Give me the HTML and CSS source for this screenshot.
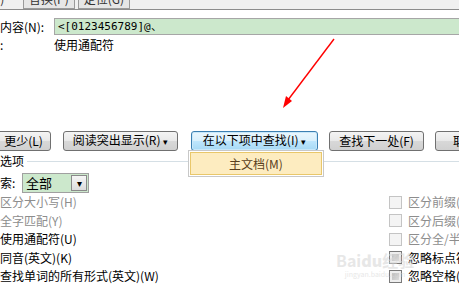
FILE: index.html
```html
<!DOCTYPE html>
<html lang="zh-CN">
<head>
    <meta charset="UTF-8">
    <title>查找和替换</title>
    <link rel="stylesheet" href="styles.css">
</head>
<body>
    <!-- Tabs (mostly cut off at the top) -->
    <div class="tabs">
        <div class="tab-strip">
            <span class="tab tab-active">查找(D)</span>
            <span class="tab">替换(P)</span>
            <span class="tab">定位(G)</span>
        </div>
    </div>

    <!-- Find what -->
    <div class="find-row">
        <span class="find-label">内容(N):</span>
        <div class="find-field">&lt;[0123456789]@、</div>
    </div>
    <div class="format-row">
        <span class="find-label">:</span>
        <span>使用通配符</span>
    </div>

    <!-- Buttons -->
    <div class="button-row">
        <button class="btn btn-less">更少(L)</button>
        <button class="btn btn-read">阅读突出显示(R) <span class="caret">▾</span></button>
        <button class="btn btn-focus">在以下项中查找(I) <span class="caret">▾</span></button>
        <button class="btn btn-next">查找下一处(F)</button>
        <button class="btn btn-cancel">取消</button>
    </div>

    <!-- Search options -->
    <div class="options-title">
        <span>选项</span>
        <span class="options-line"></span>
    </div>
    <div class="search-row">
        <span class="search-label">索:</span>
        <div class="select">
            <span class="select-value">全部</span>
            <span class="select-button">▾</span>
        </div>
    </div>

    <div class="options">
        <ul class="opt-list">
            <li class="disabled">区分大小写(H)</li>
            <li class="disabled">全字匹配(Y)</li>
            <li>使用通配符(U)</li>
            <li>同音(英文)(K)</li>
            <li>查找单词的所有形式(英文)(W)</li>
        </ul>
        <ul class="opt-list opt-right">
            <li class="disabled"><span class="box"></span>区分前缀(X)</li>
            <li class="disabled"><span class="box"></span>区分后缀(T)</li>
            <li class="disabled"><span class="box"></span>区分全/半角(M)</li>
            <li><span class="box box-grey"></span>忽略标点符号(S)</li>
            <li><span class="box box-grey"></span>忽略空格(A)</li>
        </ul>
    </div>

    <!-- Dropdown menu of the focused button -->
    <div class="menu">
        <div class="menu-item">主文档(M)</div>
    </div>

    <!-- Red annotation arrow -->
    <svg class="arrow" width="459" height="305" viewBox="0 0 459 305">
        <line x1="334" y1="39" x2="288" y2="100" stroke="#ff0000" stroke-width="1.4"/>
        <polygon points="283,108 292,101 286,96" fill="#ff0000"/>
    </svg>

    <div class="watermark">
        <span class="wm-logo">Bai<b>du</b>经验</span>
        <span class="wm-url">jingyan.baidu.com</span>
    </div>
</body>
</html>
```

FILE: styles.css
```css
body {
    margin: 0;
    width: 459px;
    height: 305px;
    overflow: hidden;
    position: relative;
    background: #ffffff;
    font-family: "Noto Sans CJK SC", "Liberation Sans", sans-serif;
    font-size: 12px;
    line-height: 14px;
    color: #000000;
}
.tabs {
    height: 9px;
    overflow: hidden;
    background: #f0f0f0;
    border-bottom: 1px solid #8c8c8c;
}
.tab-strip {
    display: flex;
    gap: 3px;
    margin-top: -11px;
    margin-left: -42px;
}
.tab {
    height: 18px;
    line-height: 18px;
    padding: 0 5px;
    border: 1px solid #9a9a9a;
    background: #e6e6e6;
    color: #333333;
}
.tab-active {
    background: #f0f0f0;
    border-color: #f0f0f0;
    width: 50px;
}
.find-row {
    display: flex;
    align-items: center;
    margin-top: 8px;
}
.find-label {
    width: 54px;
    flex-shrink: 0;
}
.find-field {
    flex: 1;
    height: 13px;
    line-height: 13px;
    border: 1px solid #a6a6a6;
    border-right: none;
    padding: 1px 3px;
    background: #cce8cc;
    font-family: "DejaVu Sans Mono", "Liberation Mono", monospace;
    font-size: 11px;
}
.format-row {
    display: flex;
    margin-top: 3px;
}
.button-row {
    display: flex;
    margin-top: 79px;
    margin-left: -20px;
    white-space: nowrap;
}
.btn {
    height: 20px;
    padding: 0;
    margin: 0;
    border: 1px solid #707070;
    border-radius: 3px;
    background: linear-gradient(#f4f4f4, #e8e8e8 50%, #d8d8d8 51%, #d0d0d0);
    font-family: "Noto Sans CJK SC", "Liberation Sans", sans-serif;
    font-size: 12px;
    line-height: 16px;
    color: #000000;
    flex-shrink: 0;
}
.caret {
    font-size: 9px;
}
.btn-less {
    width: 71px;
    padding-left: 16px;
}
.btn-read {
    width: 115px;
    margin-left: 12px;
}
.btn-focus {
    width: 127px;
    margin-left: 13px;
    border-color: #3c7fb1;
    background: linear-gradient(#eaf6fd, #d9f0fc 50%, #bee6fd 51%, #a7d9f5);
    box-shadow: inset 0 0 0 1px #c8e8fa;
}
.btn-next {
    width: 95px;
    margin-left: 11px;
}
.btn-cancel {
    width: 60px;
    margin-left: 11px;
}
.options-title {
    display: flex;
    align-items: center;
    margin-top: 3px;
}
.options-line {
    flex: 1;
    height: 1px;
    margin-left: 3px;
    background: #d5dfe5;
}
.search-row {
    display: flex;
    align-items: center;
    margin-top: 5px;
}
.search-label {
    width: 22px;
}
.select {
    display: flex;
    width: 65px;
    height: 18px;
    border: 1px solid #a0a0a0;
    background: #cce8cc;
}
.select-value {
    flex: 1;
    padding-left: 3px;
    line-height: 18px;
    font-size: 13px;
}
.select-button {
    width: 14px;
    margin: 1px;
    border: 1px solid #8a8a8a;
    background: linear-gradient(#f6f6f6, #dcdcdc);
    font-size: 10px;
    line-height: 14px;
    text-align: center;
}
.options {
    display: flex;
    justify-content: space-between;
    margin-top: 0;
}
.opt-list {
    list-style: none;
    margin: 0;
    padding: 0;
    white-space: nowrap;
}
.opt-list li {
    display: flex;
    align-items: center;
    height: 18.5px;
}
.opt-list .disabled {
    color: #8d8d8d;
}
.opt-right {
    width: 70px;
}
.box {
    width: 11px;
    height: 11px;
    margin-right: 6px;
    border: 1px solid #c4c4c4;
    background: #f4f4f4;
    flex-shrink: 0;
}
.box-grey {
    border-color: #7a7a7a;
    background: linear-gradient(135deg, #b0b0b0, #e6e6e6);
    box-shadow: inset 0 0 0 2px #eeeeee;
}
.menu {
    position: absolute;
    left: 188px;
    top: 150px;
    width: 132px;
    height: 23px;
    border: 1px solid #c8c8c8;
    background: #ffffff;
    padding: 1px;
    box-sizing: content-box;
}
.menu-item {
    height: 21px;
    line-height: 21px;
    border: 1px solid #e9c76a;
    background: #fdecc0;
    text-align: center;
    color: #5a4020;
}
.arrow {
    position: absolute;
    left: 0;
    top: 0;
    pointer-events: none;
}
.watermark {
    position: absolute;
    left: 336px;
    top: 250px;
    display: flex;
    flex-direction: column;
    align-items: center;
    color: #d8d8d8;
    opacity: 0.6;
    pointer-events: none;
}
.wm-logo {
    font-size: 16px;
    line-height: 20px;
    font-weight: bold;
}
.wm-url {
    font-size: 7px;
    line-height: 9px;
}
```
